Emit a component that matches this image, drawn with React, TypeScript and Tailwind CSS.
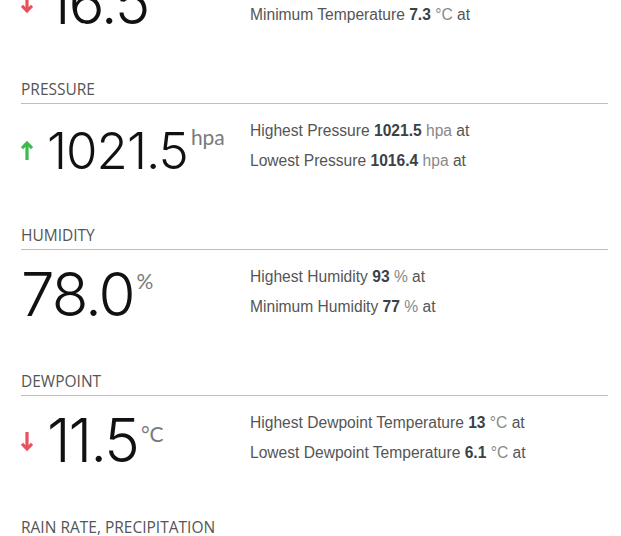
const Arrow = ({ dir }: { dir: "up" | "down" }) => {
  const color = dir === "up" ? "#3cb94f" : "#e9505b";
  return (
    <svg
      width="12"
      height="20"
      viewBox="0 0 12 20"
      className={dir === "down" ? "rotate-180" : ""}
    >
      <line x1="6" y1="3" x2="6" y2="20" stroke={color} strokeWidth="3.2" />
      <polyline
        points="1,8.2 6,3 11,8.2"
        fill="none"
        stroke={color}
        strokeWidth="3.2"
      />
    </svg>
  );
};

type Line = { label: string; value: string; unit: string };

const Section = ({
  title,
  value,
  unit,
  trend,
  lines,
  small,
  unitOffset = "mt-[1px]",
}: {
  title: string;
  value?: string;
  unit?: string;
  trend?: "up" | "down";
  lines?: Line[];
  small?: boolean;
  unitOffset?: string;
}) => {
  return (
    <div className="pb-[48px]">
      <div className="text-[15.5px] leading-[22px] pb-[3px] text-[#555] border-b border-[#bdbdbd] font-['Open_Sans',sans-serif]">
        {title}
      </div>
      {value && (
        <div className="flex mt-[12px] h-[60px]">
          <div
            className={
              small
                ? "w-[229px] flex items-start mt-[9px]"
                : "w-[229px] flex items-start mt-[2px]"
            }
          >
            <div className="flex items-center">
              {trend && (
                <div className={small ? "w-[26px] flex -mt-[3px]" : "w-[26px] flex mt-[3px]"}>
                  <Arrow dir={trend} />
                </div>
              )}
              <span
                className={
                  small
                    ? "text-[51px] leading-[52px] text-[#111] font-light font-['Inter',sans-serif] tracking-[-1px]"
                    : "text-[60px] leading-[60px] text-[#111] font-light font-['Inter',sans-serif] tracking-[-2px]"
                }
              >
                {value}
              </span>
            </div>
            <span
              className={`text-[21px] leading-none text-[#7a7a7a] ml-[3px] font-['Lato',sans-serif] ${unitOffset}`}
            >
              {unit}
            </span>
          </div>
          <div className="flex flex-col font-['Liberation_Sans',Arial,sans-serif] text-[15.6px] leading-[30px] text-[#555]">
            {lines?.map((l) => (
              <div key={l.label}>
                {l.label} <b className="text-[#3a4248]">{l.value}</b>{" "}
                <span className="text-[#888]">{l.unit}</span> at
              </div>
            ))}
          </div>
        </div>
      )}
    </div>
  );
};

export default function App() {
  return (
    <div className="bg-white w-[621px] h-[536px] overflow-hidden">
      <div className="pl-[21px] pr-[13px] -mt-[68px]">
        <Section
          title="TEMPERATURE"
          value="16.5"
          unit="°C"
          trend="down"
          unitOffset="mt-[9px]"
          lines={[
            { label: "Highest Temperature", value: "17.2", unit: "°C" },
            { label: "Minimum Temperature", value: "7.3", unit: "°C" },
          ]}
        />
        <Section
          title="PRESSURE"
          value="1021.5"
          unit="hpa"
          trend="up"
          small
          lines={[
            { label: "Highest Pressure", value: "1021.5", unit: "hpa" },
            { label: "Lowest Pressure", value: "1016.4", unit: "hpa" },
          ]}
        />
        <Section
          title="HUMIDITY"
          value="78.0"
          unit="%"
          unitOffset="mt-[6px]"
          lines={[
            { label: "Highest Humidity", value: "93", unit: "%" },
            { label: "Minimum Humidity", value: "77", unit: "%" },
          ]}
        />
        <Section
          title="DEWPOINT"
          value="11.5"
          unit="°C"
          trend="down"
          unitOffset="mt-[13px]"
          lines={[
            { label: "Highest Dewpoint Temperature", value: "13", unit: "°C" },
            { label: "Lowest Dewpoint Temperature", value: "6.1", unit: "°C" },
          ]}
        />
        <Section title="RAIN RATE, PRECIPITATION" />
      </div>
    </div>
  );
}
